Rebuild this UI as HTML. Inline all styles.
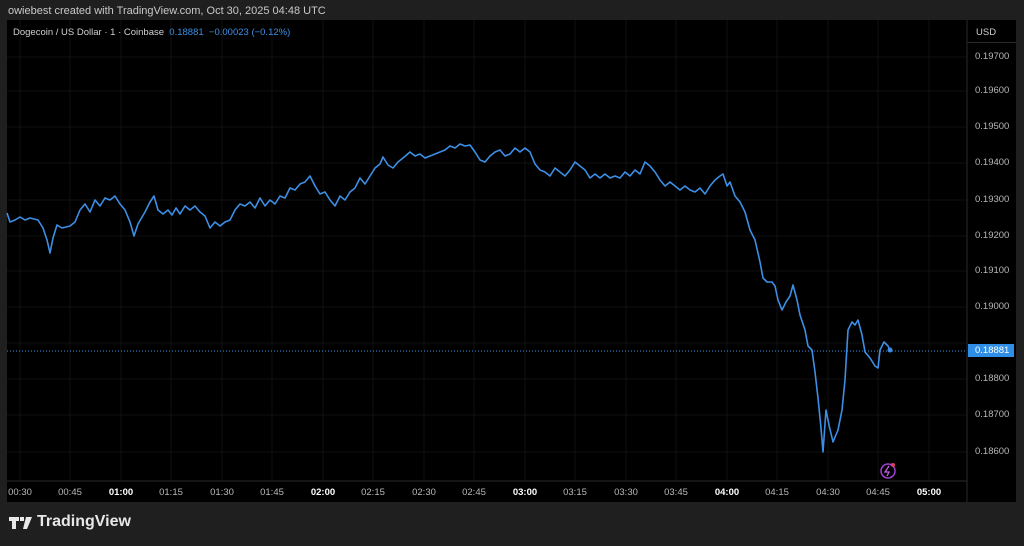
<!DOCTYPE html><html><head><style>
body{margin:0;width:1024px;height:546px;background:#1f1f1f;font-family:"Liberation Sans",sans-serif;overflow:hidden;position:relative}
.t{position:absolute;color:#c8c8c8;font-size:11px}
#ch{position:absolute;left:7px;top:20px;width:1009px;height:482px;background:#000}
.p{position:absolute;left:975px;font-size:9.5px;color:#b8b8b8}
.x{position:absolute;top:487px;font-size:9.5px;color:#b8b8b8;transform:translateX(-50%)}
</style></head><body>
<div class="t" style="left:8px;top:5px">owiebest created with TradingView.com, Oct 30, 2025 04:48 UTC</div>
<div id="ch"></div>
<svg style="position:absolute;left:0;top:0" width="1024" height="546">
<g stroke="#111" stroke-width="1">
<line x1="7" y1="57" x2="967" y2="57"/><line x1="7" y1="91" x2="967" y2="91"/><line x1="7" y1="127" x2="967" y2="127"/><line x1="7" y1="163" x2="967" y2="163"/><line x1="7" y1="200" x2="967" y2="200"/><line x1="7" y1="236" x2="967" y2="236"/><line x1="7" y1="271" x2="967" y2="271"/><line x1="7" y1="307" x2="967" y2="307"/><line x1="7" y1="343" x2="967" y2="343"/><line x1="7" y1="379" x2="967" y2="379"/><line x1="7" y1="415" x2="967" y2="415"/><line x1="7" y1="452" x2="967" y2="452"/>
<line x1="20" y1="20" x2="20" y2="481"/><line x1="70" y1="20" x2="70" y2="481"/><line x1="121" y1="20" x2="121" y2="481"/><line x1="171" y1="20" x2="171" y2="481"/><line x1="222" y1="20" x2="222" y2="481"/><line x1="272" y1="20" x2="272" y2="481"/><line x1="323" y1="20" x2="323" y2="481"/><line x1="373" y1="20" x2="373" y2="481"/><line x1="424" y1="20" x2="424" y2="481"/><line x1="474" y1="20" x2="474" y2="481"/><line x1="525" y1="20" x2="525" y2="481"/><line x1="575" y1="20" x2="575" y2="481"/><line x1="626" y1="20" x2="626" y2="481"/><line x1="676" y1="20" x2="676" y2="481"/><line x1="727" y1="20" x2="727" y2="481"/><line x1="777" y1="20" x2="777" y2="481"/><line x1="828" y1="20" x2="828" y2="481"/><line x1="878" y1="20" x2="878" y2="481"/><line x1="929" y1="20" x2="929" y2="481"/>
</g>
<line x1="7" y1="481" x2="967" y2="481" stroke="#2a2a2a"/>
<line x1="967" y1="20" x2="967" y2="502" stroke="#2a2a2a"/>
<line x1="7" y1="351" x2="967" y2="351" stroke="#3b8ee6" stroke-width="1" stroke-dasharray="1,2"/>
<polyline fill="none" stroke="#3d8fe6" stroke-width="1.6" stroke-linejoin="round" points="7,213 10,222 15,220 20,217 25,220 30,218 38,220 43,228 47,240 50,253 53,238 57,225 62,228 70,226 75,222 80,210 85,204 90,212 95,200 100,206 105,198 110,200 115,196 120,204 125,210 130,222 134,236 138,224 145,212 150,202 154,196 158,210 163,214 168,210 172,215 176,208 180,214 185,206 190,210 195,206 200,212 205,216 210,228 215,222 220,226 225,222 230,220 235,210 240,204 245,206 250,202 255,208 260,198 265,206 270,200 275,204 280,196 285,198 290,188 295,190 300,184 305,182 310,176 315,186 320,194 325,192 330,200 335,206 340,196 345,200 350,192 355,188 360,178 365,184 370,176 375,168 380,164 383,157 388,165 393,168 398,162 403,158 410,152 415,156 420,154 425,158 430,156 435,154 440,152 445,150 450,146 455,148 460,144 465,146 470,145 475,152 480,160 485,162 490,156 495,152 500,150 505,156 510,154 515,148 520,152 525,148 530,152 535,164 540,170 545,172 550,176 555,168 560,172 565,176 570,170 575,162 580,166 585,170 590,178 595,174 600,178 605,174 610,178 615,176 620,178 625,172 630,176 635,170 640,174 645,162 650,166 655,172 660,180 665,186 670,182 675,186 680,190 685,186 690,190 695,192 700,188 705,194 710,186 715,180 720,176 723,174 727,186 730,182 735,196 740,202 745,212 750,230 755,240 760,262 763,278 767,282 772,282 775,286 778,300 782,310 786,302 790,296 793,285 797,300 800,315 805,330 808,346 812,350 815,372 818,398 821,428 823,452 826,410 829,425 833,442 838,430 842,410 845,380 848,330 852,322 855,325 858,320 862,335 865,352 870,358 875,366 878,368 880,350 884,342 888,346 890,350"/>
<circle cx="890" cy="350" r="2.5" fill="#3d8fe6"/>
<circle cx="888" cy="471" r="7" fill="none" stroke="#a040d0" stroke-width="1.5"/>
<path d="M889,466 L885,472 L889,472 L887,476" stroke="#c060e0" fill="none" stroke-width="1.3"/>
<circle cx="893" cy="465" r="2" fill="#e04060"/>
<rect x="968" y="344" width="46" height="13" fill="#2e8ee8"/>
<path d="M9,517h10v4h-3v8h-4v-8h-3z M20,517h4v4h-4z M26,517h6l-5,12h-4z" fill="#e8e8e8"/>
</svg>
<div class="t" style="left:13px;top:27px;font-size:9.5px;color:#d0d0d0">Dogecoin / US Dollar · 1 · Coinbase <span style="color:#3d8fe6">&nbsp;0.18881 &nbsp;−0.00023 (−0.12%)</span></div>
<div class="t" style="left:976px;top:27px;font-size:9.5px;color:#d0d0d0">USD</div>
<div style="position:absolute;left:967px;top:20px;width:49px;height:22px;border-bottom:1px solid #2a2a2a"></div>
<div class="p" style="top:51px">0.19700</div><div class="p" style="top:85px">0.19600</div><div class="p" style="top:121px">0.19500</div><div class="p" style="top:157px">0.19400</div><div class="p" style="top:194px">0.19300</div><div class="p" style="top:230px">0.19200</div><div class="p" style="top:265px">0.19100</div><div class="p" style="top:301px">0.19000</div><div class="p" style="top:373px">0.18800</div><div class="p" style="top:409px">0.18700</div><div class="p" style="top:446px">0.18600</div>
<div class="p" style="top:345px;color:#fff">0.18881</div>
<div class="x" style="left:20px">00:30</div><div class="x" style="left:70px">00:45</div><div class="x" style="left:121px;color:#fff;font-weight:bold">01:00</div><div class="x" style="left:171px">01:15</div><div class="x" style="left:222px">01:30</div><div class="x" style="left:272px">01:45</div><div class="x" style="left:323px;color:#fff;font-weight:bold">02:00</div><div class="x" style="left:373px">02:15</div><div class="x" style="left:424px">02:30</div><div class="x" style="left:474px">02:45</div><div class="x" style="left:525px;color:#fff;font-weight:bold">03:00</div><div class="x" style="left:575px">03:15</div><div class="x" style="left:626px">03:30</div><div class="x" style="left:676px">03:45</div><div class="x" style="left:727px;color:#fff;font-weight:bold">04:00</div><div class="x" style="left:777px">04:15</div><div class="x" style="left:828px">04:30</div><div class="x" style="left:878px">04:45</div><div class="x" style="left:929px;color:#fff;font-weight:bold">05:00</div>
<div class="t" style="left:37px;top:513px;font-size:16px;font-weight:bold;color:#e8e8e8">TradingView</div>
</body></html>
